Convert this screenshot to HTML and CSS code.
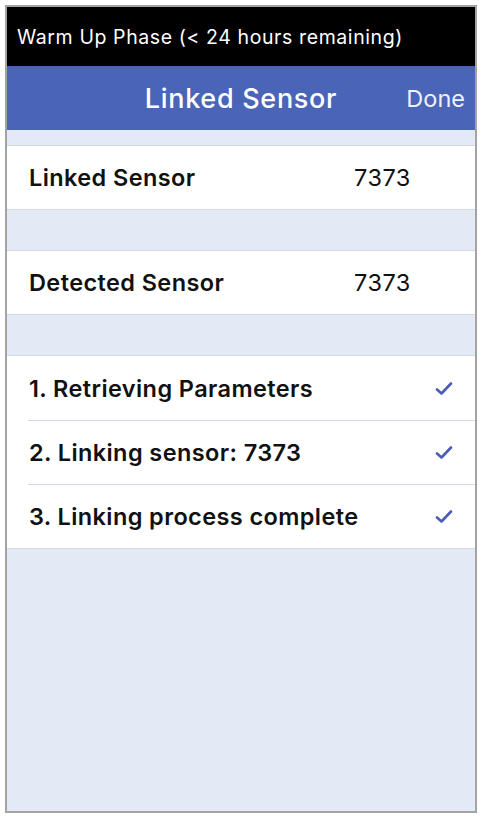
FILE: index.html
```html
<!DOCTYPE html>
<html>
<head>
<meta charset="utf-8">
<link rel="stylesheet" href="styles.css">
</head>
<body>
<div class="frame">
  <div class="status">Warm Up Phase (&lt; 24 hours remaining)</div>
  <div class="navbar">
    <div class="title">Linked Sensor</div>
    <div class="done">Done</div>
  </div>
  <div class="content">
    <div class="group first">
      <div class="row"><span class="label">Linked Sensor</span><span class="value">7373</span></div>
    </div>
    <div class="group">
      <div class="row"><span class="label">Detected Sensor</span><span class="value">7373</span></div>
    </div>
    <div class="group">
      <div class="row step"><span class="label">1. Retrieving Parameters</span>
        <svg class="check" viewBox="0 0 18 15" width="18" height="15"><path d="M2 8.5 L6.5 12.5 L16 2.5" fill="none" stroke="#4a5db0" stroke-width="2.6" stroke-linecap="round" stroke-linejoin="round"/></svg></div>
      <div class="row step sep"><span class="label">2. Linking sensor: 7373</span>
        <svg class="check" viewBox="0 0 18 15" width="18" height="15"><path d="M2 8.5 L6.5 12.5 L16 2.5" fill="none" stroke="#4a5db0" stroke-width="2.6" stroke-linecap="round" stroke-linejoin="round"/></svg></div>
      <div class="row step sep"><span class="label">3. Linking process complete</span>
        <svg class="check" viewBox="0 0 18 15" width="18" height="15"><path d="M2 8.5 L6.5 12.5 L16 2.5" fill="none" stroke="#4a5db0" stroke-width="2.6" stroke-linecap="round" stroke-linejoin="round"/></svg></div>
    </div>
  </div>
</div>
</body>
</html>
```
FILE: styles.css
```css
html, body {
  margin: 0;
  padding: 0;
  background: #ffffff;
}
body {
  font-family: Inter, "Liberation Sans", Arial, sans-serif;
  color: #111111;
}
.frame {
  margin: 5px 0 0 5px;
  width: 468px;
  height: 804px;
  border: 2px solid #a3a3a6;
  display: flex;
  flex-direction: column;
  background: #e3e9f5;
}
.status {
  background: #000000;
  color: #ffffff;
  height: 59px;
  display: flex;
  align-items: center;
  padding-left: 10px;
  font-size: 19.5px;
  letter-spacing: 0.6px;
}
.navbar {
  background: #4a64b8;
  height: 64px;
  display: flex;
  align-items: center;
  justify-content: center;
  position: relative;
  color: #ffffff;
}
.title {
  font-size: 27px;
  font-weight: 500;
  letter-spacing: 0.7px;
}
.done {
  position: absolute;
  right: 10px;
  top: 0;
  bottom: 0;
  display: flex;
  align-items: center;
  font-size: 23.5px;
  color: #eef1fa;
}
.content {
  flex: 1;
  display: flex;
  flex-direction: column;
}
.group {
  background: #ffffff;
  margin-top: 40px;
  border-top: 1px solid #d3d8e2;
  border-bottom: 1px solid #d3d8e2;
}
.group.first {
  margin-top: 15px;
}
.row {
  height: 63px;
  display: flex;
  align-items: center;
  padding-left: 22px;
  font-size: 23.5px;
  letter-spacing: 0.4px;
}
.step {
  height: 64px;
}
.label {
  font-weight: 600;
  flex: 1;
}
.value {
  width: 121px;
  font-weight: 400;
  letter-spacing: 0.5px;
}
.sep {
  background-image: linear-gradient(#d3d8e2, #d3d8e2);
  background-size: calc(100% - 21px) 1px;
  background-position: right top;
  background-repeat: no-repeat;
}
.check {
  margin-right: 22px;
}
```
